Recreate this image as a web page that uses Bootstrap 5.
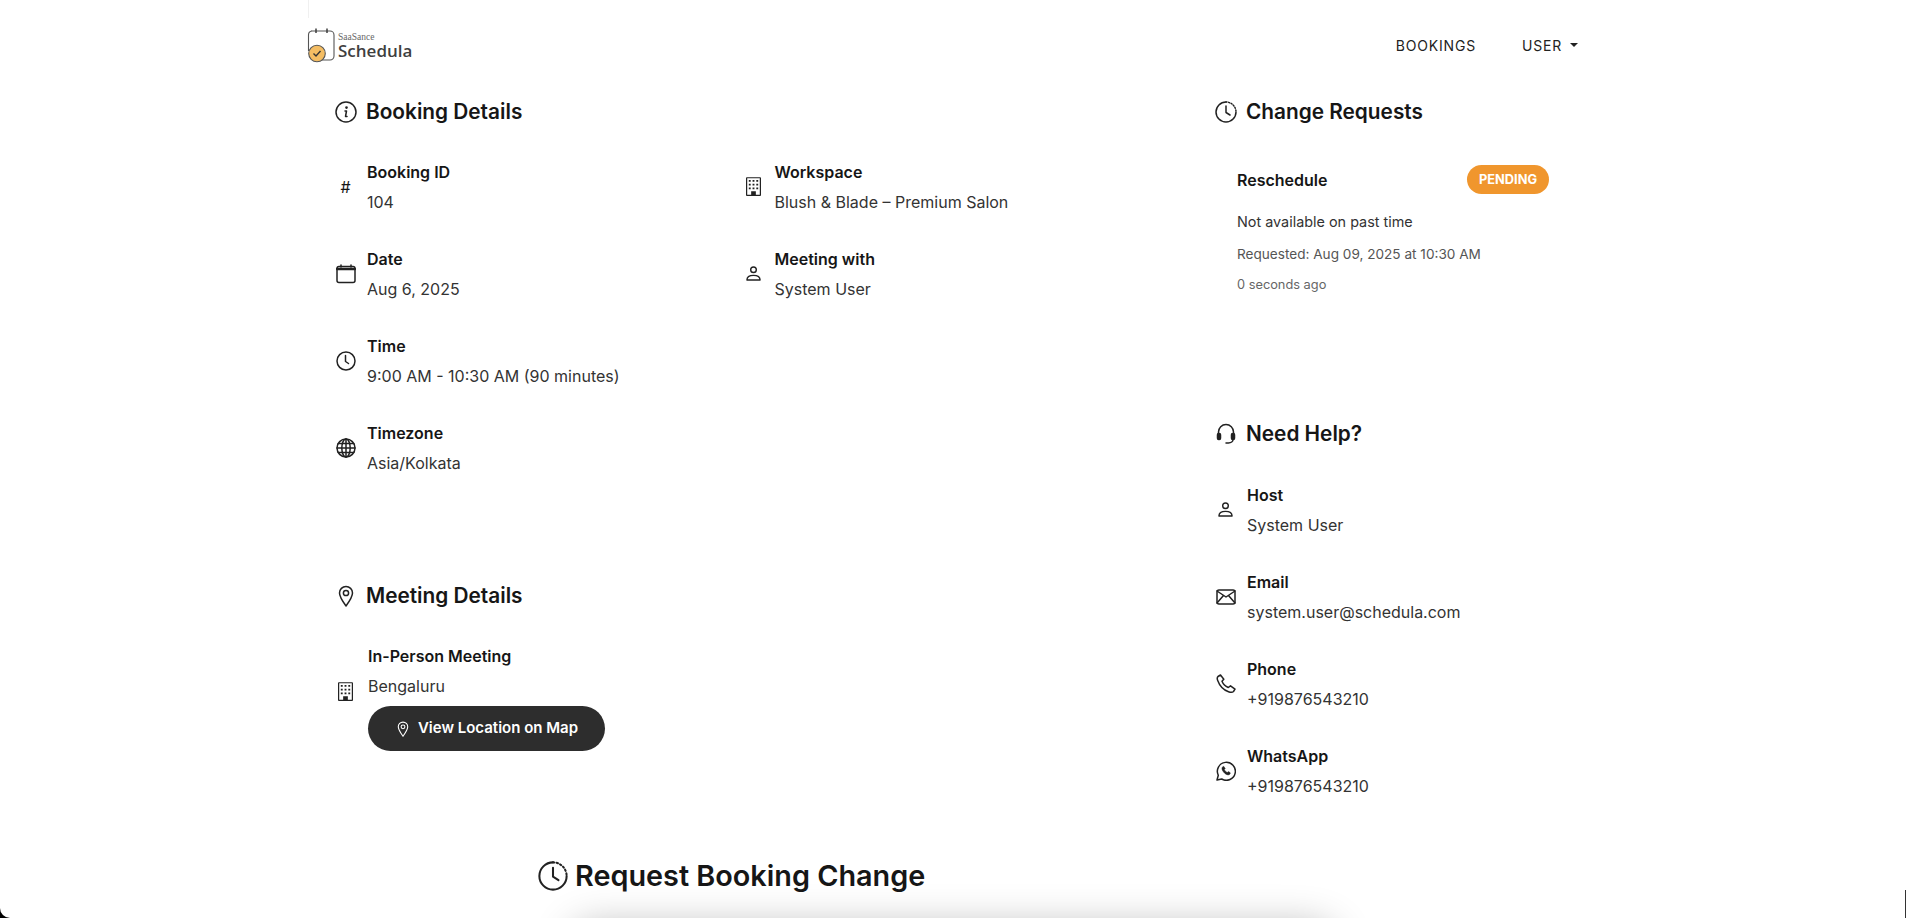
<!DOCTYPE html>
<html lang="en"><head><meta charset="utf-8"><title>Booking</title>
<link href="https://cdn.jsdelivr.net/npm/bootstrap@5.3.0/dist/css/bootstrap.min.css" rel="stylesheet">
<style>
html,body{height:918px;overflow:hidden;background:#000}
body{font-family:Inter,"Liberation Sans",sans-serif;color:#161616}
.page-shell{background:#fff;height:918px;overflow:hidden;border-bottom-left-radius:10px;position:relative}
.top-tick{position:absolute;left:308px;top:0;width:1px;height:18px;background:#f0f0f0}
.edge-line{position:absolute;right:0;top:890px;width:1px;height:28px;background:#333}
.site-nav{height:90px;padding:0}
.brand-box{display:flex;align-items:center;gap:1px;margin-left:2px;color:#444;text-decoration:none}
.brand-words{display:flex;flex-direction:column;line-height:1}
.brand-top{font-family:"Liberation Serif",serif;font-size:9.5px;line-height:8px;color:#666;margin-bottom:2px}
.brand-name{font-family:"Open Sans",sans-serif;font-size:17px;font-weight:600;line-height:15px;color:#3f3f3f}
.menu-link{font-size:14px;letter-spacing:.8px;color:#222;text-decoration:none;padding:0 23px}
.menu-link.dropdown-toggle::after{margin-left:8px}
.panel{padding:10px 30px 0}
.sec-head{display:flex;align-items:center;gap:9px;font-size:20.8px;font-weight:600;margin:0;height:24px;line-height:24px}
.det-grid{margin-top:31px}
.det-shift{margin-left:-2.500px}
.info-row{display:flex;align-items:center;gap:11px;height:63px;margin-bottom:24px}
.info-ico{width:21px;flex:none;display:flex;justify-content:center;align-items:center}
.meet-ico{margin-bottom:12px}
.info-label{font-size:16px;font-weight:600;line-height:24px;margin-bottom:6px}
.info-val{font-size:16px;line-height:24px;color:#333}
.req-box{padding:0 0 0 22px;width:334px;margin-top:41px;height:257px}
.pend-pill{background:#f0962d;color:#fff;font-size:12.8px;font-weight:700;border-radius:15px;padding:0 12px;line-height:29px;height:29px}
.req-title{font-size:16px;font-weight:600}
.req-a{font-size:14.4px;color:#333;margin-top:17px}
.req-b{font-size:13.6px;color:#555;margin-top:11px}
.req-c{font-size:12.8px;color:#666;margin-top:11px}
.map-btn{background:#2d2d2d;color:#fff;border-radius:23px;font-size:15px;font-weight:600;width:237px;height:45px;display:flex;align-items:center;justify-content:center;gap:7px;border:0;margin-top:8px}
.map-btn:hover{background:#2d2d2d;color:#fff}
.meet-head{margin-top:81px}
.meet-row{margin-top:36px}
.help-list{margin-top:32px}
.change-head{display:flex;align-items:center;gap:7px;font-size:28.8px;font-weight:600;height:34px;line-height:34px;margin:33px 0 0 538px}
.form-card{width:760px;height:300px;margin:34px auto 0;background:#fff;border-radius:20px;box-shadow:0 0 40px rgba(0,0,0,.3)}
.ic{display:block;fill:none;stroke:#222;stroke-width:1.5;stroke-linecap:round;stroke-linejoin:round}
</style></head><body>
<div class="page-shell">
<div class="top-tick"></div><div class="edge-line"></div>
<nav class="navbar site-nav"><div class="container d-flex justify-content-between align-items-center">
<a class="brand-box" href="#">
<svg width="30" height="36" viewBox="0 0 30 36"><path d="M4 4H23a4 4 0 0 1 4 4V29a4 4 0 0 1-4 4H14" fill="none" stroke="#555" stroke-width="1.1"/><path d="M1.500 24V8a4 4 0 0 1 3-4" fill="none" stroke="#555" stroke-width="1.1"/><path d="M9 1.500V6M20 1.500V6" stroke="#333" stroke-width="1.4"/><circle cx="10" cy="26.500" r="8.300" fill="#f4bd63" stroke="#555" stroke-width="1.100"/><path d="M6.500 26.500l2.500 2.500 4.500-5" fill="none" stroke="#333" stroke-width="1.400"/></svg>
<span class="brand-words"><span class="brand-top">SaaSance</span><span class="brand-name">Schedula</span></span></a>
<div class="d-flex align-items-center"><a class="menu-link" href="#">BOOKINGS</a><a class="menu-link dropdown-toggle" href="#">USER</a></div>
</div></nav>
<div class="container"><div class="row">
<div class="col-8"><div class="panel">
<h2 class="sec-head"><svg class="ic" width="22" height="22" viewBox="0 0 22 22" stroke-width="1.2"><circle cx="11" cy="11" r="10"/><circle cx="11.500" cy="6.600" r=".6" fill="#222"/><path d="M10 10h1.500l-1 5.500H12"/></svg>Booking Details</h2>
<div class="row det-grid">
<div class="col-6">
<div class="info-row"><span class="info-ico"><span class="fs-6">#</span></span><div><div class="info-label">Booking ID</div><div class="info-val">104</div></div></div>
<div class="info-row"><span class="info-ico"><svg class="ic" width="20" height="20" viewBox="0 0 20 20"><rect x="1" y="2.500" width="18" height="16" rx="2"/><path d="M1 5h18" stroke-width="2.400"/><path d="M5 1v2M15 1v2"/></svg></span><div><div class="info-label">Date</div><div class="info-val">Aug 6, 2025</div></div></div>
<div class="info-row"><span class="info-ico"><svg class="ic" width="20" height="20" viewBox="0 0 20 20" stroke-width="1.300"><circle cx="10" cy="10" r="9"/><path d="M9.500 4.500V10.500l3 2"/></svg></span><div><div class="info-label">Time</div><div class="info-val">9:00 AM - 10:30 AM (90 minutes)</div></div></div>
<div class="info-row"><span class="info-ico"><svg class="ic" width="20" height="20" viewBox="0 0 20 20" stroke-width="1.200"><circle cx="10" cy="10" r="9"/><ellipse cx="10" cy="10" rx="4.200" ry="9"/><path d="M10 1v18M1 10h18M2.200 5.500h15.600M2.200 14.500h15.600"/></svg></span><div><div class="info-label">Timezone</div><div class="info-val">Asia/Kolkata</div></div></div>
</div>
<div class="col-6"><div class="det-shift">
<div class="info-row"><span class="info-ico"><svg width="15" height="19" viewBox="0 0 16 20"><path fill-rule="evenodd" fill="#222" d="M0 1a1 1 0 0 1 1-1h14a1 1 0 0 1 1 1v18a1 1 0 0 1-1 1H1a1 1 0 0 1-1-1zM1.300 1.300V18.700H5.500V15h5v3.700h4.200V1.300z"/><path fill="#222" d="M3 3h2v2H3zM7 3h2v2H7zM11 3h2v2h-2zM3 7h2v2H3zM7 7h2v2H7zM11 7h2v2h-2zM3 11h2v2H3zM7 11h2v2H7zM11 11h2v2h-2z"/></svg></span><div><div class="info-label">Workspace</div><div class="info-val">Blush &amp; Blade – Premium Salon</div></div></div>
<div class="info-row"><span class="info-ico"><svg class="ic" width="15" height="15" viewBox="0 0 16 16" stroke-width="1.200"><circle cx="8" cy="4" r="3"/><path d="M1 15c0-3 2-5 7-5s7 2 7 5z"/></svg></span><div><div class="info-label">Meeting with</div><div class="info-val">System User</div></div></div>
</div></div>
</div>
<h2 class="sec-head meet-head"><svg class="ic" width="22" height="22" viewBox="0 0 22 22" stroke-width="1.300"><path d="M11 21C7 15.500 4.500 12 4.500 8a6.500 6.500 0 0 1 13 0c0 4-2.500 7.500-6.500 13z"/><circle cx="11" cy="8" r="2.600"/></svg>Meeting Details</h2>
<div class="d-flex align-items-center meet-row">
<span class="info-ico meet-ico"><svg width="15" height="19" viewBox="0 0 16 20"><path fill-rule="evenodd" fill="#222" d="M0 1a1 1 0 0 1 1-1h14a1 1 0 0 1 1 1v18a1 1 0 0 1-1 1H1a1 1 0 0 1-1-1zM1.300 1.300V18.700H5.500V15h5v3.700h4.200V1.300z"/><path fill="#222" d="M3 3h2v2H3zM7 3h2v2H7zM11 3h2v2h-2zM3 7h2v2H3zM7 7h2v2H7zM11 7h2v2h-2zM3 11h2v2H3zM7 11h2v2H7zM11 11h2v2h-2z"/></svg></span>
<div class="ms-2 ps-1"><div class="info-label">In-Person Meeting</div><div class="info-val">Bengaluru</div>
<button class="btn map-btn"><svg width="16" height="16" viewBox="0 0 22 22" fill="none" stroke="#fff" stroke-width="1.500"><path d="M11 21C7 15.500 4.500 12 4.500 8a6.500 6.500 0 0 1 13 0c0 4-2.500 7.500-6.500 13z"/><circle cx="11" cy="8" r="2.600"/></svg>View Location on Map</button></div>
</div>
</div></div>
<div class="col-4"><div class="panel">
<h2 class="sec-head"><svg class="ic" width="22" height="22" viewBox="0 0 22 22" stroke-width="1.300"><path d="M11 1a10 10 0 1 0 10 10"/><path d="M11 1a10 10 0 0 1 10 10" stroke-dasharray="1 1.700"/><path d="M11 5v6.500l4 2.500"/></svg>Change Requests</h2>
<div class="req-box">
<div class="d-flex justify-content-between align-items-center"><span class="req-title">Reschedule</span><span class="pend-pill">PENDING</span></div>
<div class="req-a">Not available on past time</div>
<div class="req-b">Requested: Aug 09, 2025 at 10:30 AM</div>
<div class="req-c">0 seconds ago</div>
</div>
<h2 class="sec-head"><svg class="ic" width="22" height="22" viewBox="0 0 22 22" stroke-width="1.700"><path d="M3.500 12V9a7.500 7.500 0 0 1 15 0v3"/><rect x="2.500" y="10.500" width="3" height="6" rx="1.200" fill="#222"/><rect x="16.500" y="10.500" width="3" height="6" rx="1.200" fill="#222"/><path d="M18 16.500c0 2-2 3.500-4.500 3.500H11"/></svg>Need Help?</h2>
<div class="help-list">
<div class="info-row"><span class="info-ico"><svg class="ic" width="15" height="15" viewBox="0 0 16 16" stroke-width="1.200"><circle cx="8" cy="4" r="3"/><path d="M1 15c0-3 2-5 7-5s7 2 7 5z"/></svg></span><div><div class="info-label">Host</div><div class="info-val">System User</div></div></div>
<div class="info-row"><span class="info-ico"><svg class="ic" width="20" height="16" viewBox="0 0 20 16" stroke-width="1.300"><rect x="1" y="1" width="18" height="14" rx="2"/><path d="M1 2l9 6 9-6M1 14l6.500-7.500M19 14l-6.500-7.500"/></svg></span><div><div class="info-label">Email</div><div class="info-val">system.user@schedula.com</div></div></div>
<div class="info-row"><span class="info-ico"><svg class="ic" width="20" height="20" viewBox="0 0 20 20" stroke-width="1.200"><path d="M2 2.500 4.500 1l3.300 4.200-1.800 2c1 2.500 3.300 5 6.300 6.300l2.200-1.700 4.500 3.400-1.500 2.300c-1 1-3 1-5 .2C7.500 16 3.500 11.500 1.700 6.500 1 4.800 1.200 3.300 2 2.500z"/></svg></span><div><div class="info-label">Phone</div><div class="info-val">+919876543210</div></div></div>
<div class="info-row"><span class="info-ico"><svg class="ic" width="20" height="20" viewBox="0 0 20 20" stroke-width="1.500"><path d="M1 19l1.300-4.700A9 9 0 1 1 5.700 18z"/><path d="M7 5.500c-1.500 1-1.500 3 .5 5.500s4.500 3.500 6 2.500c.8-.6 1-1.500.5-2l-1.700-.9-1 .9c-1-.3-2.600-1.800-3-3l.9-1L7.800 5.500z" fill="#222" stroke-width=".5"/></svg></span><div><div class="info-label">WhatsApp</div><div class="info-val">+919876543210</div></div></div>
</div>
</div></div>
</div></div>
<h2 class="change-head"><svg class="ic" width="30" height="30" viewBox="0 0 22 22" stroke-width="1.200"><path d="M11 1a10 10 0 1 0 10 10"/><path d="M11 1a10 10 0 0 1 10 10" stroke-dasharray="1 1.700"/><path d="M11 5v6.500l4 2.500"/></svg>Request Booking Change</h2>
<div class="form-card"></div>
</div>
</body></html>
